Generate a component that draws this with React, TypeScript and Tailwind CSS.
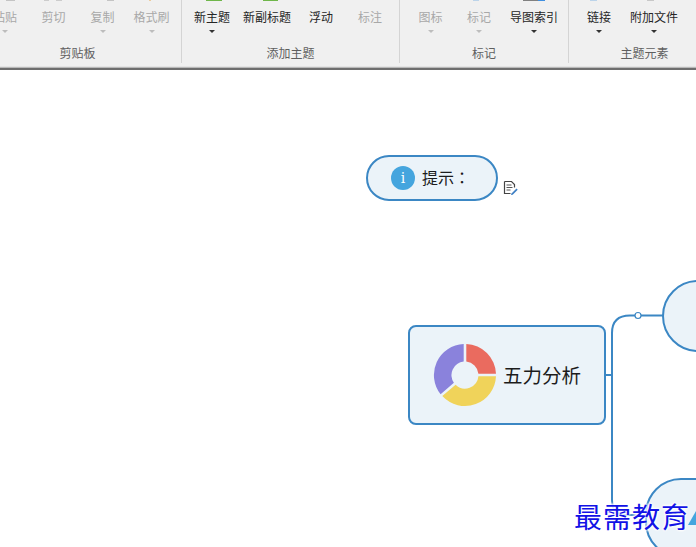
const cjk = "font-['Noto_Sans_CJK_SC','Liberation_Sans',sans-serif]"

function Tool({ label, disabled, arrow, w }: { label: string; disabled?: boolean; arrow?: boolean; w: string }) {
  return (
    <div className={`${w} flex flex-col items-center pt-[9px] shrink-0`}>
      <span className={`text-[12px] leading-[16px] whitespace-nowrap ${disabled ? "text-[#a8a8a8]" : "text-[#262626]"}`}>{label}</span>
      {arrow && (
        <span
          className={`mt-[5px] w-0 h-0 border-x-[3px] border-x-transparent border-t-[3px] ${
            disabled ? "border-t-[#bdbdbd]" : "border-t-[#333333]"
          }`}
        />
      )}
    </div>
  )
}

function Group({ title, w, children, pl, titleClass }: { title: string; w: string; children: React.ReactNode; pl: string; titleClass?: string }) {
  return (
    <div className={`${w} h-[63px] shrink-0 border-r border-[#d4d4d4] flex flex-col`}>
      <div className={`flex h-[44px] ${pl}`}>{children}</div>
      <div className={`text-[12px] leading-[16px] text-[#5f5f5f] text-center pt-[1px] ${titleClass ?? ""}`}>{title}</div>
    </div>
  )
}

function Ribbon() {
  return (
    <div className="h-[66px] bg-[#f0f0f0] flex overflow-hidden relative">
      <Group title="剪贴板" w="w-[182px]" pl="-ml-[19px]" titleClass="pr-[26px]">
        <Tool label="粘贴" disabled arrow w="w-[48px]" />
        <Tool label="剪切" disabled w="w-[49px]" />
        <Tool label="复制" disabled arrow w="w-[49px]" />
        <Tool label="格式刷" disabled arrow w="w-[49px]" />
      </Group>
      <Group title="添加主题" w="w-[218px]" pl="pl-[5px]">
        <Tool label="新主题" arrow w="w-[50px]" />
        <Tool label="新副标题" w="w-[60px]" />
        <Tool label="浮动" w="w-[48px]" />
        <Tool label="标注" disabled w="w-[50px]" />
      </Group>
      <Group title="标记" w="w-[169px]" pl="pl-[7px]">
        <Tool label="图标" disabled arrow w="w-[47px]" />
        <Tool label="标记" disabled arrow w="w-[50px]" />
        <Tool label="导图索引" arrow w="w-[60px]" />
      </Group>
      <div className="w-[127px] h-[63px] shrink-0 flex flex-col">
        <div className="flex h-[44px] pl-[7px]">
          <Tool label="链接" arrow w="w-[46px]" />
          <Tool label="附加文件" arrow w="w-[64px]" />
        </div>
        <div className="text-[12px] leading-[16px] text-[#5f5f5f] text-center pt-[1px] pl-[24px] whitespace-nowrap">主题元素</div>
      </div>
      {/* bits of the icons cut off at the top edge */}
      <span className="absolute left-[6px] top-0 w-[9px] h-[1px] bg-[#c4c4c4]" />
      <span className="absolute left-[44px] top-0 w-[5px] h-[1px] bg-[#cccccc]" />
      <span className="absolute left-[56px] top-0 w-[6px] h-[1px] bg-[#cccccc]" />
      <span className="absolute left-[107px] top-0 w-[7px] h-[1px] bg-[#c4c4c4]" />
      <span className="absolute left-[149px] top-0 w-[2px] h-[1px] bg-[#eccb9c]" />
      <span className="absolute left-[206px] top-0 w-[16px] h-[1px] bg-[#6fb64a]" />
      <span className="absolute left-[263px] top-0 w-[15px] h-[1px] bg-[#6fb64a]" />
      <span className="absolute left-[473px] top-0 w-[6px] h-[1px] bg-[#bcd4ea]" />
      <span className="absolute left-[523px] top-0 w-[15px] h-[1px] bg-[#808080]" />
      <span className="absolute left-[538px] top-0 w-[7px] h-[1px] bg-[#3f8fe0]" />
      <span className="absolute left-[590px] top-0 w-[7px] h-[1px] bg-[#bcd4ea]" />
      <span className="absolute left-[647px] top-0 w-[7px] h-[1px] bg-[#c8c8c8]" />
    </div>
  )
}

function Donut() {
  return (
    <svg width="64" height="64" viewBox="0 0 64 64" className="shrink-0">
      <path d="M33.3 1 A31 31 0 0 1 63 30.7 L45.400 30.700 A13.500 13.500 0 0 0 33.300 18.600 Z" fill="#ea6b5f" />
      <path d="M63 33.3 A31 31 0 0 1 9.3 53.100 L22.600 41.800 A13.500 13.500 0 0 0 45.400 33.300 Z" fill="#f0d35a" />
      <path d="M30.7 1 A31 31 0 0 0 7.600 51.200 L20.900 39.800 A13.500 13.500 0 0 1 30.700 18.600 Z" fill="#8a82dc" />
    </svg>
  )
}

export default function App() {
  return (
    <div className={`w-[696px] h-[547px] bg-white overflow-hidden ${cjk}`}>
      <Ribbon />
      <div className="h-[4px] bg-[#b9b9b9] border-t border-[#e4e4e4] border-b-2 border-b-[#6e6e6e]" />
      <div className="relative h-[477px]">
        {/* 提示 node */}
        <div className="absolute left-[366px] top-[85px] w-[132px] h-[46px] rounded-[23px] border-2 border-[#3b87c4] bg-[#ebf3f9] flex items-center pl-[23px] gap-[7px]">
          <span className="w-[24px] h-[24px] rounded-full bg-[#45a5de] text-white text-[14px] font-['DejaVu_Serif',serif] flex items-center justify-center">i</span>
          <span className="text-[16px] leading-[24px] text-[#1c1c1c] whitespace-nowrap -mt-[3px] font-['Noto_Sans_CJK_TC',sans-serif]">提示：</span>
        </div>
        <svg className="absolute left-[503px] top-[110px]" width="16" height="16" viewBox="0 0 16 16" fill="none">
          <path d="M1.500 1.500h7l3 3v3M1.500 1.500v12h6" stroke="#444444" strokeWidth="1.200" />
          <path d="M3.500 5h5M3.500 7.500h6M3.500 10h4" stroke="#555555" />
          <path d="M8.500 13.500l5-5 1.200 1.200-5 5-1.700.4z" fill="#3d7fc4" />
        </svg>

        {/* connectors */}
        <svg className="absolute left-0 top-0" width="696" height="477" fill="none">
          <path
            d="M605 305H612M612 430Q612 445 627 445H646M612 430V263Q612 245.500 630 245.500H664"
            stroke="#3b87c4"
            strokeWidth="2"
          />
          <circle cx="638" cy="245.500" r="3" fill="white" stroke="#3b87c4" strokeWidth="1.200" />
        </svg>

        {/* 五力分析 node */}
        <div className="absolute left-[408px] top-[255px] w-[198px] h-[100px] rounded-[8px] border-2 border-[#3b87c4] bg-[#ebf3f9] flex items-center pl-[23px] gap-[6px]">
          <Donut />
          <span className="text-[19.5px] text-[#1c1c1c] whitespace-nowrap">五力分析</span>
        </div>

        {/* right nodes, cut off by the window */}
        <div className="absolute left-[662px] top-[210px] w-[100px] h-[72px] rounded-[36px] border-2 border-[#3b87c4] bg-[#ebf3f9]" />
        <div className="absolute left-[645px] top-[408px] w-[120px] h-[80px] rounded-[36px] border-2 border-[#3b87c4] bg-[#ebf3f9]" />
        <span className="absolute left-[688px] top-[441px] w-0 h-0 border-x-[8px] border-x-transparent border-b-[14px] border-b-[#45a5de]" />

        {/* watermark */}
        <span className="absolute left-[574px] top-[428px] text-[28px] leading-[36px] font-['Noto_Sans_CJK_TC',serif] text-[#1212e6] tracking-[1px] whitespace-nowrap [text-shadow:0_0_3px_white,0_0_3px_white,0_0_3px_white,0_0_3px_white]">
          最需教育
        </span>
      </div>
    </div>
  )
}
